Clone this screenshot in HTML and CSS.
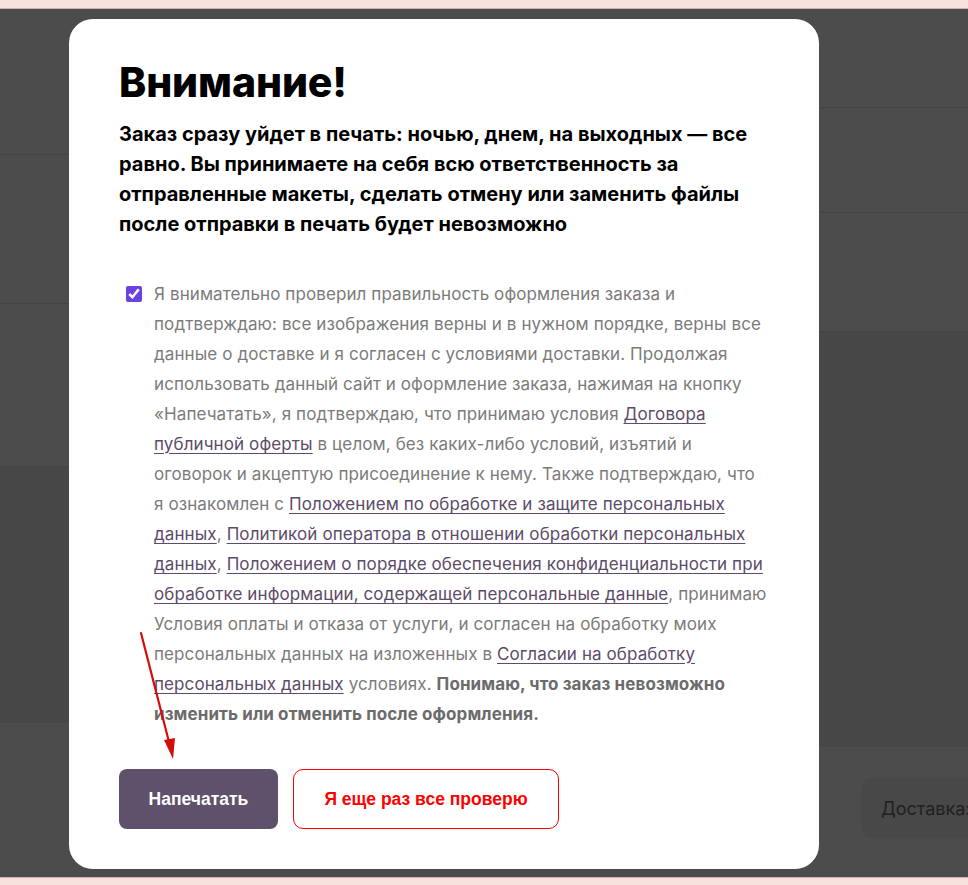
FILE: index.html
```html
<!DOCTYPE html>
<html lang="ru">
<head>
  <meta charset="UTF-8">
  <meta name="viewport" content="width=device-width, initial-scale=1.0">
  <title>Внимание!</title>
  <link rel="stylesheet" href="styles.css">
</head>
<body>
  <div class="frame">
    <!-- страница под затемнением -->
    <div class="page">
      <div class="col col-left">
        <div class="blk" style="height:146px"></div>
        <div class="blk" style="height:149px"></div>
        <div class="blk" style="height:163px"></div>
        <div class="blk blk-grey" style="height:256px"></div>
        <div class="blk blk-last"></div>
      </div>
      <div class="col col-right">
        <div class="blk" style="height:99px"></div>
        <div class="blk" style="height:105px"></div>
        <div class="blk" style="height:119px"></div>
        <div class="blk blk-grey" style="height:415px"></div>
        <div class="blk blk-last">
          <div class="delivery">Доставка:</div>
        </div>
      </div>
    </div>

    <div class="overlay">
      <div class="modal">
        <h1 class="modal-title">Внимание!</h1>
        <p class="modal-lead">Заказ сразу уйдет в печать: ночью, днем, на выходных — все равно. Вы принимаете на себя всю ответственность за отправленные макеты, сделать отмену или заменить файлы после отправки в печать будет невозможно</p>

        <label class="agree">
          <input type="checkbox" class="agree-check" checked>
          <span class="agree-text">Я внимательно проверил правильность оформления заказа и<br>
            подтверждаю: все изображения верны и в нужном порядке, верны все<br>
            данные о доставке и я согласен с условиями доставки. Продолжая<br>
            использовать данный сайт и оформление заказа, нажимая на кнопку<br>
            «Напечатать», я подтверждаю, что принимаю условия <a href="#">Договора<br>
            публичной оферты</a> в целом, без каких-либо условий, изъятий и<br>
            оговорок и акцептую присоединение к нему. Также подтверждаю, что<br>
            я ознакомлен с <a href="#">Положением по обработке и защите персональных<br>
            данных</a>, <a href="#">Политикой оператора в отношении обработки персональных<br>
            данных</a>, <a href="#">Положением о порядке обеспечения конфиденциальности при<br>
            обработке информации, содержащей персональные данные</a>, принимаю<br>
            Условия оплаты и отказа от услуги, и согласен на обработку моих<br>
            персональных данных на изложенных в <a href="#">Согласии на обработку<br>
            персональных данных</a> условиях. <b>Понимаю, что заказ невозможно<br>
            изменить или отменить после оформления.</b></span>
        </label>

        <div class="modal-btns">
          <button class="btn btn-print">Напечатать</button>
          <button class="btn btn-check">Я еще раз все проверю</button>
        </div>

        <svg class="arrow" width="50" height="140" viewBox="0 0 50 140">
          <line x1="3" y1="3" x2="31" y2="112" stroke="#d40c0c" stroke-width="2.2" stroke-linecap="round"/>
          <polygon points="35,129 26,110 37,108" fill="#d40c0c"/>
        </svg>
      </div>
    </div>
  </div>
</body>
</html>
```

FILE: styles.css
```css
html, body { margin: 0; padding: 0; }
body { height: 885px; background: #f6e1dc; font-family: Inter, "Noto Sans", sans-serif; overflow: hidden; }

/* область страницы с модалкой */
.frame { position: relative; margin-top: 8px; height: 868px; border-top: 1px solid #cdb3ab; border-bottom: 1px solid #cdb3ab; overflow: hidden; background: #fff; }

.page { display: grid; grid-template-columns: 480px 1fr; height: 100%; }
.col { display: flex; flex-direction: column; }
.blk { border-bottom: 1px solid #e3e3e3; box-sizing: border-box; }
.blk-grey { background: #ededed; border-bottom: none; }
.blk-last { flex: 1; border-bottom: none; }
.col-right .blk-last { padding: 31px 0 0 381px; }
.delivery { display: flex; align-items: center; height: 60px; padding: 0 20px; background: #f0f0f0; border-radius: 10px 0 0 10px; color: #6e6e6e; font-size: 18px; white-space: nowrap; }

/* затемнение */
.overlay { position: absolute; inset: 0; background: rgba(0, 0, 0, .7); }

.modal { position: relative; box-sizing: border-box; width: 750px; height: 850px; margin: 10px 0 0 69px; padding: 39px 40px 40px 50px; background: #fff; border-radius: 24px; }
.modal-title { margin: 0; font-size: 41px; line-height: 48px; font-weight: 800; color: #000; letter-spacing: -.1px; }
.modal-lead { margin: 13px 0 0; font-size: 20px; line-height: 30px; font-weight: 700; color: #000; }

.agree { display: flex; gap: 12px; margin-top: 40px; cursor: pointer; }
.agree-check { flex: none; width: 16px; height: 16px; margin: 7px 0 0 7px; accent-color: #6a42e0; }
.agree-text { font-size: 17px; line-height: 30px; color: #7b7b7b; white-space: nowrap; letter-spacing: .1px; }
.agree-text a { color: #5c4b69; text-decoration: underline; text-underline-offset: 3px; }
.agree-text b { color: #6b6b6b; font-weight: 700; }

.modal-btns { display: flex; gap: 15px; margin-top: 40px; }
.btn { height: 60px; box-sizing: border-box; font-family: "Liberation Sans", Arial, sans-serif; font-size: 17.5px; font-weight: 700; cursor: pointer; }
.btn-print { width: 159px; border: none; border-radius: 8px; background: #5f516b; color: #fff; }
.btn-check { width: 266px; border: 1px solid #f00; border-radius: 10px; background: #fff; color: #f00; }

/* красная стрелка-пометка */
.arrow { position: absolute; left: 69px; top: 611px; }
```
